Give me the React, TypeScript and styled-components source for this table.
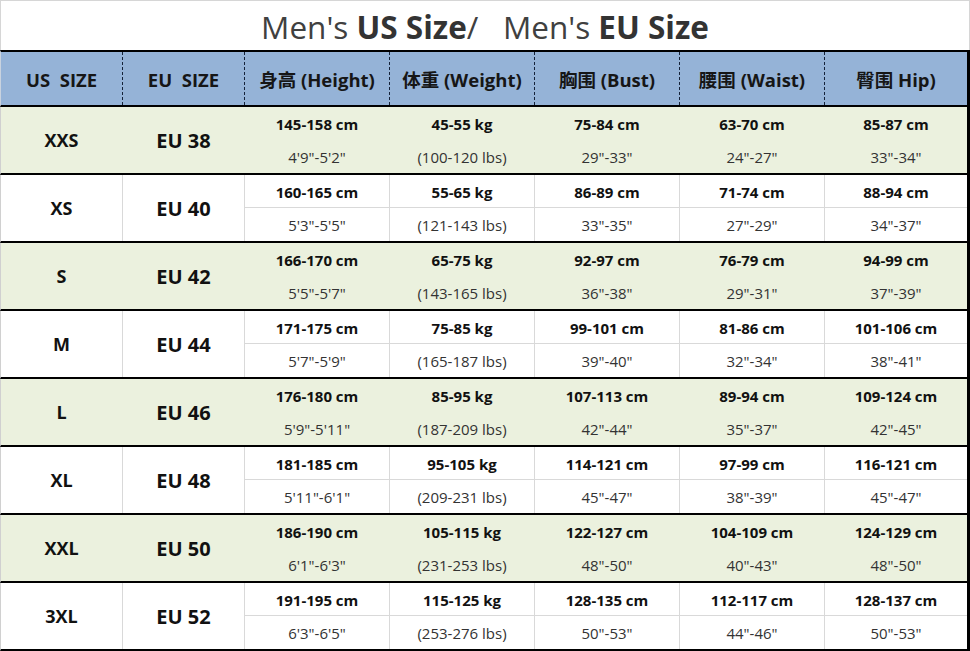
import React from "react";
import styled, { createGlobalStyle } from "styled-components";

const Global = createGlobalStyle`
  html, body { margin: 0; padding: 0; background: #ffffff; }
  body { font-family: "Open Sans", "Noto Sans CJK SC", sans-serif; }
`;

const Page = styled.div`
  width: 970px;
  height: 651px;
  overflow: hidden;
  background: #fff;
`;

const Title = styled.div`
  height: 50px;
  box-sizing: border-box;
  border: 1px solid #d6d6d6;
  border-bottom: none;
  display: flex;
  align-items: center;
  justify-content: center;
  padding-top: 1px;
  font-family: "Open Sans", "Noto Sans CJK SC", sans-serif;
  font-size: 31.5px;
  color: #404040;
  white-space: pre;
  b { font-weight: 700; color: #333; }
`;

const COLS = "121px 122px 145px 145px 145px 145px 143px";

const Header = styled.div`
  display: grid;
  grid-template-columns: ${COLS};
  height: 57px;
  box-sizing: border-box;
  border-top: 2px solid #000;
  border-bottom: 2px solid #000;
  border-left: 1px solid #c9d3df;
  border-right: 3px solid #000;
  background: #95b3d7;
`;

const HeadCell = styled.div<{ $first?: boolean }>`
  display: flex;
  align-items: center;
  justify-content: center;
  border-left: ${(p) => (p.$first ? "none" : "1px dashed #142238")};
  font-family: "Open Sans", "Noto Sans CJK SC", sans-serif;
  font-weight: 700;
  font-size: 18.5px;
  color: #161616;
  white-space: pre;
  padding-top: 1px;
`;

const Row = styled.div<{ $green: boolean }>`
  display: grid;
  grid-template-columns: ${COLS};
  height: 68px;
  box-sizing: border-box;
  border-bottom: 2px solid #000;
  border-left: 1px solid #d0d0d0;
  border-right: 3px solid #000;
  background: ${(p) => (p.$green ? "#ebf1de" : "#ffffff")};
`;

const SizeCell = styled.div<{ $first?: boolean; $green: boolean; $big?: boolean }>`
  display: flex;
  align-items: center;
  justify-content: center;
  border-left: ${(p) =>
    p.$first ? "none" : `1px solid ${p.$green ? "#ebf1de" : "#d9d9d9"}`};
  font-family: "Open Sans", sans-serif;
  font-weight: 700;
  font-size: ${(p) => (p.$big ? "20px" : "18px")};
  color: #111;
`;

const MeasureCell = styled.div<{ $green: boolean }>`
  display: grid;
  grid-template-rows: 1fr 1fr;
  border-left: 1px solid ${(p) => (p.$green ? "#ebf1de" : "#d9d9d9")};
`;

const Metric = styled.div<{ $green: boolean }>`
  display: flex;
  align-items: center;
  justify-content: center;
  border-bottom: 1px solid ${(p) => (p.$green ? "#ebf1de" : "#d9d9d9")};
  font-family: "Open Sans", sans-serif;
  font-weight: 700;
  font-size: 15px;
  color: #111;
  padding-top: 1px;
`;

const Imperial = styled.div`
  display: flex;
  align-items: center;
  justify-content: center;
  font-family: "Open Sans", sans-serif;
  font-weight: 400;
  font-size: 15px;
  color: #333;
`;

type M = [string, string];
type R = { us: string; eu: string; m: M[] };

const rows: R[] = [
  { us: "XXS", eu: "EU 38", m: [["145-158 cm", `4'9"-5'2"`], ["45-55 kg", "(100-120 lbs)"], ["75-84 cm", `29"-33"`], ["63-70 cm", `24"-27"`], ["85-87 cm", `33"-34"`]] },
  { us: "XS", eu: "EU 40", m: [["160-165 cm", `5'3"-5'5"`], ["55-65 kg", "(121-143 lbs)"], ["86-89 cm", `33"-35"`], ["71-74 cm", `27"-29"`], ["88-94 cm", `34"-37"`]] },
  { us: "S", eu: "EU 42", m: [["166-170 cm", `5'5"-5'7"`], ["65-75 kg", "(143-165 lbs)"], ["92-97 cm", `36"-38"`], ["76-79 cm", `29"-31"`], ["94-99 cm", `37"-39"`]] },
  { us: "M", eu: "EU 44", m: [["171-175 cm", `5'7"-5'9"`], ["75-85 kg", "(165-187 lbs)"], ["99-101 cm", `39"-40"`], ["81-86 cm", `32"-34"`], ["101-106 cm", `38"-41"`]] },
  { us: "L", eu: "EU 46", m: [["176-180 cm", `5'9"-5'11"`], ["85-95 kg", "(187-209 lbs)"], ["107-113 cm", `42"-44"`], ["89-94 cm", `35"-37"`], ["109-124 cm", `42"-45"`]] },
  { us: "XL", eu: "EU 48", m: [["181-185 cm", `5'11"-6'1"`], ["95-105 kg", "(209-231 lbs)"], ["114-121 cm", `45"-47"`], ["97-99 cm", `38"-39"`], ["116-121 cm", `45"-47"`]] },
  { us: "XXL", eu: "EU 50", m: [["186-190 cm", `6'1"-6'3"`], ["105-115 kg", "(231-253 lbs)"], ["122-127 cm", `48"-50"`], ["104-109 cm", `40"-43"`], ["124-129 cm", `48"-50"`]] },
  { us: "3XL", eu: "EU 52", m: [["191-195 cm", `6'3"-6'5"`], ["115-125 kg", "(253-276 lbs)"], ["128-135 cm", `50"-53"`], ["112-117 cm", `44"-46"`], ["128-137 cm", `50"-53"`]] },
];

const heads = ["US  SIZE", "EU  SIZE", "身高 (Height)", "体重 (Weight)", "胸围 (Bust)", "腰围 (Waist)", "臀围 Hip)"];

export default function App() {
  return (
    <Page>
      <Global />
      <Title>
        Men's <b>US Size</b>/   Men's <b>EU Size</b>
      </Title>
      <Header>
        {heads.map((h, i) => (
          <HeadCell key={h} $first={i === 0}>{h}</HeadCell>
        ))}
      </Header>
      {rows.map((r, i) => {
        const green = i % 2 === 0;
        return (
          <Row key={r.us} $green={green}>
            <SizeCell $first $green={green}>{r.us}</SizeCell>
            <SizeCell $green={green} $big>{r.eu}</SizeCell>
            {r.m.map(([a, b], j) => (
              <MeasureCell key={j} $green={green}>
                <Metric $green={green}>{a}</Metric>
                <Imperial>{b}</Imperial>
              </MeasureCell>
            ))}
          </Row>
        );
      })}
    </Page>
  );
}
